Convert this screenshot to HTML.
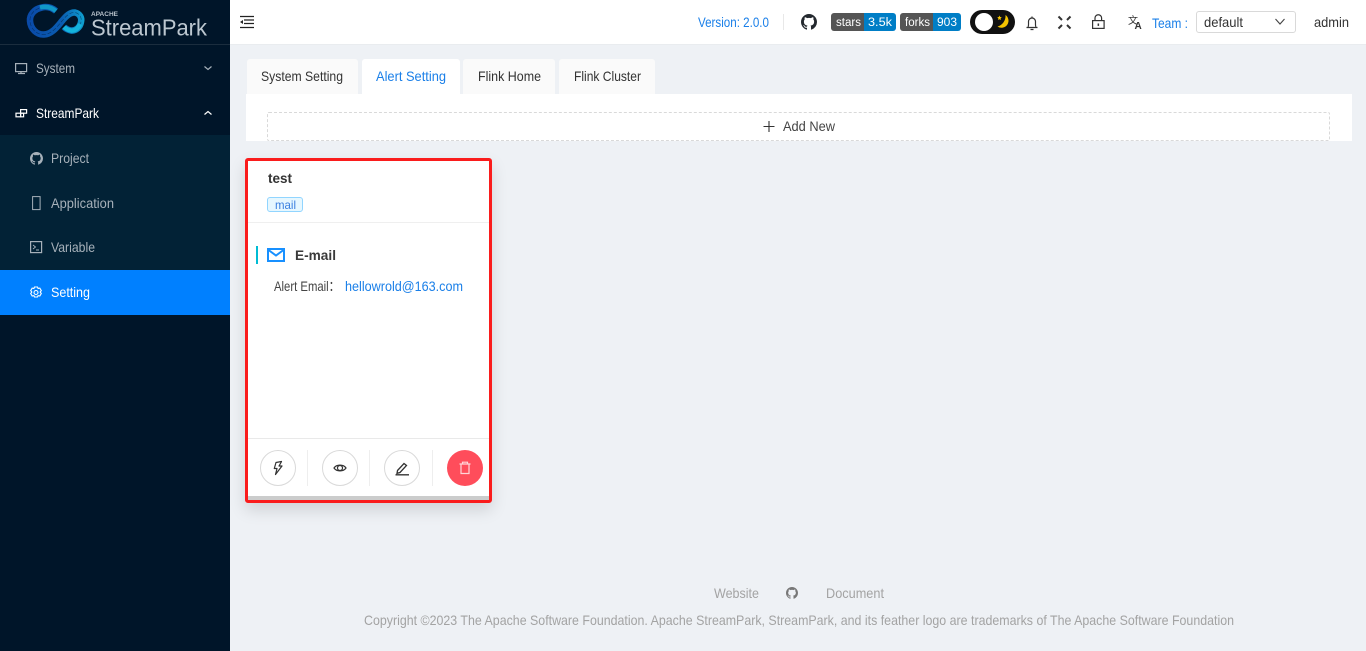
<!DOCTYPE html>
<html lang="en"><head><meta charset="utf-8"><title>StreamPark Setting</title>
<style>
html,body{margin:0;padding:0;width:1366px;height:651px;overflow:hidden;background:#eef1f5;font-family:"Liberation Sans",sans-serif}
.b{position:absolute;box-sizing:border-box}
svg.o{position:absolute;left:0;top:0}
svg text{font-family:"Liberation Sans",sans-serif}
</style></head><body>
<div class="b" style="left:0;top:0;width:230px;height:651px;background:#001529"></div>
<div class="b" style="left:0;top:44px;width:230px;height:1px;background:#1b2d3e"></div>
<div class="b" style="left:0;top:135px;width:230px;height:135px;background:#022236"></div>
<div class="b" style="left:0;top:270px;width:230px;height:45px;background:#0080ff"></div>
<div class="b" style="left:230px;top:0;width:1136px;height:45px;background:#fff;border-bottom:1px solid #e9ecef"></div>
<div class="b" style="left:247px;top:59px;width:111px;height:35px;background:#fafafa;border-radius:3px 3px 0 0"></div>
<div class="b" style="left:362px;top:59px;width:98px;height:35px;background:#fff;border-radius:3px 3px 0 0"></div>
<div class="b" style="left:463px;top:59px;width:92px;height:35px;background:#fafafa;border-radius:3px 3px 0 0"></div>
<div class="b" style="left:559px;top:59px;width:96px;height:35px;background:#fafafa;border-radius:3px 3px 0 0"></div>
<div class="b" style="left:246px;top:94px;width:1106px;height:47px;background:#fff"></div>
<div class="b" style="left:267px;top:112px;width:1063px;height:29px;border:1px dashed #d9d9d9;border-radius:2px"></div>
<div class="b" style="left:245px;top:158px;width:247px;height:345px;background:#fff;border:3px solid #fa1c1c;border-radius:3px;box-shadow:0 7px 16px rgba(0,0,0,.13)"></div>
<div class="b" style="left:248px;top:496px;width:241px;height:4px;background:#cbcccc"></div>
<div class="b" style="left:248px;top:222px;width:241px;height:1px;background:#efefef"></div>
<div class="b" style="left:248px;top:438px;width:241px;height:1px;background:#e9e9e9"></div>
<div class="b" style="left:256px;top:246px;width:2px;height:18px;background:#00bcd4"></div>
<div class="b" style="left:267px;top:197px;width:36px;height:15px;background:#e6f7ff;border:1px solid #91d5ff;border-radius:3px"></div>
<div class="b" style="left:307px;top:450px;width:1px;height:36px;background:#eee"></div>
<div class="b" style="left:369px;top:450px;width:1px;height:36px;background:#eee"></div>
<div class="b" style="left:432px;top:450px;width:1px;height:36px;background:#eee"></div>
<div class="b" style="left:260px;top:450px;width:36px;height:36px;border:1px solid #d9d9d9;border-radius:50%"></div>
<div class="b" style="left:322px;top:450px;width:36px;height:36px;border:1px solid #d9d9d9;border-radius:50%"></div>
<div class="b" style="left:384px;top:450px;width:36px;height:36px;border:1px solid #d9d9d9;border-radius:50%"></div>
<div class="b" style="left:447px;top:450px;width:36px;height:36px;background:#ff4d5b;border-radius:50%"></div>
<div class="b" style="left:783px;top:14px;width:1px;height:16px;background:#e8e8e8"></div>
<div class="b" style="left:831px;top:13px;width:33px;height:18px;background:#555;border-radius:3px 0 0 3px"></div>
<div class="b" style="left:864px;top:13px;width:32px;height:18px;background:#007ec6;border-radius:0 3px 3px 0"></div>
<div class="b" style="left:900px;top:13px;width:33px;height:18px;background:#555;border-radius:3px 0 0 3px"></div>
<div class="b" style="left:933px;top:13px;width:28px;height:18px;background:#007ec6;border-radius:0 3px 3px 0"></div>
<div class="b" style="left:970px;top:10px;width:45px;height:24px;background:#111;border-radius:12px"></div>
<div class="b" style="left:975px;top:13px;width:18px;height:18px;background:#fff;border-radius:50%"></div>
<div class="b" style="left:1196px;top:11px;width:100px;height:22px;border:1px solid #d9d9d9;border-radius:3px;background:#fff"></div>

<svg class="o" width="1366" height="651" viewBox="0 0 1366 651" xmlns="http://www.w3.org/2000/svg">
<defs>
<symbol id="gh" viewBox="0 0 16 16"><path fill-rule="evenodd" d="M8 0C3.58 0 0 3.58 0 8c0 3.54 2.29 6.53 5.47 7.59.4.07.55-.17.55-.38 0-.19-.01-.82-.01-1.49-2.01.37-2.53-.49-2.69-.94-.09-.23-.48-.94-.82-1.13-.28-.15-.68-.52-.01-.53.63-.01 1.08.58 1.23.82.72 1.21 1.87.87 2.33.66.07-.52.28-.87.51-1.07-1.78-.2-3.64-.89-3.64-3.95 0-.87.31-1.59.82-2.15-.08-.2-.36-1.02.08-2.12 0 0 .67-.21 2.2.82.64-.18 1.32-.27 2-.27.68 0 1.36.09 2 .27 1.53-1.04 2.2-.82 2.2-.82.44 1.1.16 1.92.08 2.12.51.56.82 1.27.82 2.15 0 3.07-1.87 3.75-3.65 3.95.29.25.54.73.54 1.48 0 1.07-.01 1.93-.01 2.2 0 .21.15.46.55.38A8.013 8.013 0 0016 8c0-4.42-3.58-8-8-8z"/></symbol>
<linearGradient id="lg" gradientUnits="userSpaceOnUse" x1="28" x2="84" y1="20" y2="20"><stop offset="0" stop-color="#0a4aa8"/><stop offset=".6" stop-color="#0a5cb0"/><stop offset="1" stop-color="#0f9fd0"/></linearGradient>
</defs>

<!-- logo -->
<path d="M56 11C51 7 46 6.500 42 7.500C34 9 29.500 15 30 21C30.500 29 37 35 44 34.500C52 34 57 27 62 21C66 16 70 12 75 12.500C80 13.500 82 18 81 22C80 28 75 31 71 30.500C68 30 66 29 64 27" fill="none" stroke="url(#lg)" stroke-width="6.500"/>
<path d="M56 11C51 7 46 6.500 42 7.500C34 9 29.500 15 30 21C30.500 29 37 35 44 34.500C52 34 57 27 62 21C66 16 70 12 75 12.500C80 13.500 82 18 81 22C80 28 75 31 71 30.500C68 30 66 29 64 27" fill="none" stroke="#001a36" stroke-width=".6" stroke-dasharray="4 2" opacity=".6"/>
<path d="M40 7.500C46 6 51 7 56 11" stroke="#1098c8" stroke-width="4.500" fill="none"/>
<path d="M80 24C78 29 74 31 71 30.500C68 30 66 29 64 27" stroke="#14b4dc" stroke-width="4.500" fill="none"/>
<text x="91" y="16" font-size="6.500" font-weight="bold" fill="#b8c2cb" textLength="27" lengthAdjust="spacingAndGlyphs">APACHE</text>
<text x="91" y="35.500" font-size="23" fill="#bcc7d0" textLength="116" lengthAdjust="spacingAndGlyphs">StreamPark</text>

<!-- sidebar text -->
<g font-size="14" fill="#a7b1ba">
<text x="36" y="73" textLength="39" lengthAdjust="spacingAndGlyphs">System</text>
<text x="36" y="118" fill="#fff" textLength="63" lengthAdjust="spacingAndGlyphs">StreamPark</text>
<text x="51" y="163" textLength="38" lengthAdjust="spacingAndGlyphs">Project</text>
<text x="51" y="208" textLength="63" lengthAdjust="spacingAndGlyphs">Application</text>
<text x="51" y="252" textLength="44" lengthAdjust="spacingAndGlyphs">Variable</text>
<text x="51" y="297" fill="#fff" textLength="39" lengthAdjust="spacingAndGlyphs">Setting</text>
</g>
<!-- sidebar icons -->
<g fill="none" stroke="#a7b1ba" stroke-width="1.200">
<rect x="15.600" y="63.600" width="11" height="8"/><path d="M18 73.500h7M21 72v1.500"/>
<path d="M204.500 66.500l3.500 3 3.500-3"/>
<path stroke="#fff" d="M204.500 114.500l3.500-3 3.500 3"/>
<g stroke="#fff"><rect x="20.600" y="109.600" width="6" height="3.600"/><rect x="16" y="113.200" width="4.600" height="3.600"/><rect x="20.600" y="113.200" width="3" height="3.600"/></g>
<rect x="32.600" y="196.600" width="7.500" height="13" stroke-width="1"/>
<rect x="30.600" y="241.600" width="11" height="11" stroke-width="1.200"/><path d="M33 245l2.500 2-2.500 2M36 250h3" stroke-width=".9"/>
<g stroke="#fff" stroke-width="1.100"><circle cx="36" cy="292.500" r="2"/><path d="M34.500 287l3 0 .6 1.500 1.700-.4 1.500 2.500-1.100 1.400 1.100 1.500-1.500 2.500-1.700-.4-.6 1.400h-3l-.6-1.400-1.700.4-1.500-2.500 1.100-1.500-1.100-1.400 1.500-2.500 1.700.4z"/></g>
</g>
<use href="#gh" x="30" y="152" width="13" height="13" fill="#a7b1ba"/>

<!-- header -->
<g stroke="#222" stroke-width="1.300" fill="none">
<path d="M240 16.500h14M244 20h10M244 23.500h10M240 27.500h14"/>
</g>
<path d="M243 20l-3 2 3 2z" fill="#222"/>
<text x="698" y="27" font-size="14" fill="#1a7fe8" textLength="71" lengthAdjust="spacingAndGlyphs">Version: 2.0.0</text>
<use href="#gh" x="801" y="14" width="16" height="16" fill="#24292f"/>
<g font-size="11.500" fill="#fff">
<text x="836" y="26" textLength="25" lengthAdjust="spacingAndGlyphs">stars</text>
<text x="868" y="26" textLength="24" lengthAdjust="spacingAndGlyphs">3.5k</text>
<text x="905" y="26" textLength="25" lengthAdjust="spacingAndGlyphs">forks</text>
<text x="937" y="26" textLength="20" lengthAdjust="spacingAndGlyphs">903</text>
</g>
<path d="M1005.500 15A7 7 0 0 1 997.500 26.500A11 11 0 0 0 1005.500 15z" fill="#f5c400"/>
<path d="M999.500 15.500l.7 1.500 1.600.3-1.200 1.100.3 1.600-1.400-.8-1.400.8.3-1.600-1.200-1.100 1.600-.3z" fill="#f5c400"/>
<g fill="none" stroke="#333" stroke-width="1.200">
<path d="M1026.500 27.500h11M1027.800 27.500c1-1 .7-3 .7-6a3.500 3.500 0 0 1 7 0c0 3-.3 5 .7 6M1030.500 29.500h3M1032 16.500v1.500"/>
<path d="M1058.500 16.500l3.500 3.500M1070.500 16.500l-3.500 3.500M1058.500 28.500l3.500-3.500M1070.500 28.500l-3.500-3.500" stroke-width="2"/>
<rect x="1092.600" y="20.600" width="11.500" height="7.800"/><path d="M1095 20.500v-2.500a3.300 3.300 0 0 1 6.600 0v2.500"/>
</g>
<rect x="1097.600" y="23.500" width="1.500" height="2.400" fill="#333"/>
<text x="1128" y="24" font-size="10" fill="#333" font-family="'Noto Sans CJK SC'">文</text>
<text x="1134.500" y="29" font-size="10" font-weight="bold" fill="#333">A</text>
<text x="1152" y="28" font-size="14" fill="#1a7fe8" textLength="36" lengthAdjust="spacingAndGlyphs">Team :</text>
<text x="1204" y="27" font-size="14" fill="#333" textLength="39" lengthAdjust="spacingAndGlyphs">default</text>
<path d="M1275.500 19l4.500 5 4.500-5" fill="none" stroke="#444" stroke-width="1.100"/>
<text x="1314" y="27" font-size="14" fill="#333" textLength="35" lengthAdjust="spacingAndGlyphs">admin</text>

<!-- tabs -->
<g font-size="14" fill="#333">
<text x="261" y="81" textLength="82" lengthAdjust="spacingAndGlyphs">System Setting</text>
<text x="376" y="81" fill="#1a7fe8" textLength="70" lengthAdjust="spacingAndGlyphs">Alert Setting</text>
<text x="478" y="81" textLength="63" lengthAdjust="spacingAndGlyphs">Flink Home</text>
<text x="574" y="81" textLength="67" lengthAdjust="spacingAndGlyphs">Flink Cluster</text>
<text x="783" y="131" fill="#444" textLength="52" lengthAdjust="spacingAndGlyphs">Add New</text>
</g>
<path d="M769 121v11M763.500 126.500h11" stroke="#333" stroke-width="1.100"/>

<!-- card -->
<text x="268" y="183" font-size="14" font-weight="bold" fill="#333" textLength="24" lengthAdjust="spacingAndGlyphs">test</text>
<text x="275" y="209" font-size="12" fill="#3a7fe0" textLength="21" lengthAdjust="spacingAndGlyphs">mail</text>
<rect x="268" y="249" width="16" height="12" fill="#fff" stroke="#1890ff" stroke-width="2"/>
<path d="M268.500 250l7.500 5.500 7.500-5.500" fill="none" stroke="#1890ff" stroke-width="2"/>
<text x="295" y="260" font-size="14" font-weight="bold" fill="#3a3a3a" textLength="41" lengthAdjust="spacingAndGlyphs">E-mail</text>
<text x="274" y="291" font-size="14" fill="#444" textLength="66" lengthAdjust="spacingAndGlyphs" font-family="'Liberation Sans','Noto Sans CJK SC',sans-serif">Alert Email：</text>
<text x="345" y="291" font-size="14" fill="#1a7fe8" textLength="118" lengthAdjust="spacingAndGlyphs">hellowrold@163.com</text>
<!-- action icons -->
<g fill="none" stroke="#333" stroke-width="1.200">
<path d="M276 462.500l5.500-1-.5 1-2 3.500h3l-6.500 8.500 1.500-6h-2.700z" stroke-linejoin="round"/>
<path d="M334 468c2.500-3.800 9.500-3.800 12 0c-2.500 3.800-9.500 3.800-12 0z"/><circle cx="340" cy="468" r="2.500"/>
<path d="M397.500 470.500l6.500-7 2.500 2-6.500 7-3 .8zM395.500 474.800h13.500" stroke-width="1.300"/>
</g>
<g fill="none" stroke="#ffd5d8" stroke-width="1.200">
<path d="M459.500 464h11M462.500 464v-1.800h5v1.800M461 464v9.500h8v-9.500"/>
</g>

<!-- footer -->
<g font-size="14" fill="#a3a3a3">
<text x="714" y="598" textLength="45" lengthAdjust="spacingAndGlyphs">Website</text>
<text x="826" y="598" textLength="58" lengthAdjust="spacingAndGlyphs">Document</text>
<text x="364" y="625" textLength="870" lengthAdjust="spacingAndGlyphs">Copyright ©2023 The Apache Software Foundation. Apache StreamPark, StreamPark, and its feather logo are trademarks of The Apache Software Foundation</text>
</g>
<use href="#gh" x="786" y="587" width="12" height="12" fill="#777"/>
</svg>
</body></html>
